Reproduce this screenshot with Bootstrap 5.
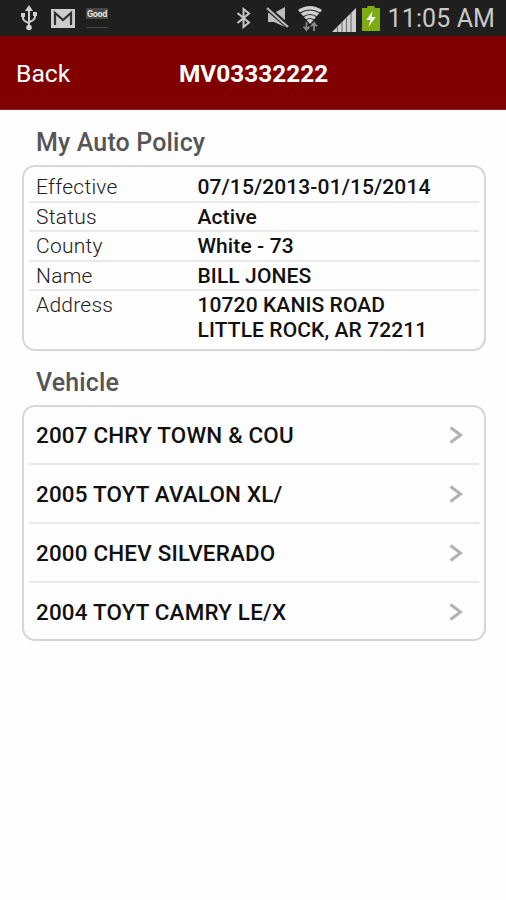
<!DOCTYPE html>
<html lang="en">
<head>
<meta charset="utf-8">
<meta name="viewport" content="width=device-width, initial-scale=1">
<title>My Auto Policy</title>
<link href="https://cdn.jsdelivr.net/npm/bootstrap@5.3.0/dist/css/bootstrap.min.css" rel="stylesheet">
<style>
body{font-family:Roboto,"Liberation Sans",sans-serif;background:#fefefe;color:#111;height:900px;overflow:hidden}
svg{display:block;flex:none}
.status{height:36px;background:#1f1f1f;color:#c9c9c9;padding:0 11px 0 20px}
.clock{font-size:25px;line-height:36px;white-space:nowrap;letter-spacing:.1px;margin-left:8px;padding-top:2px}
.mail{margin-left:13px}
.good{width:22px;height:20px;margin-left:11px;border-bottom:1px solid #484848}
.good span{display:block;height:11px;background:#484848;color:#e2e2e2;font-size:9px;line-height:13px;font-weight:700;letter-spacing:-.4px;text-align:center}
.bt{margin-right:15px}
.mute{margin-right:7px}
.wifi{margin-right:9px;margin-top:1px}
.signal{margin-right:6px;margin-top:3px}
.topbar{height:73.5px;background:#800000;color:#fff;border-bottom:1px solid #922;padding:3px 0 0 16px}
.back{width:163px;font-size:24.7px;line-height:1;color:#fff;padding-top:2px}
.title{font-size:24.4px;line-height:1;font-weight:700}
main{padding:18px 20px 0 22px}
.heading{font-size:25px;font-weight:500;line-height:30px;color:#555;margin:0 0 0 14px;letter-spacing:.15px}
.second{margin-top:17px}
.panel{border:2px solid #d6d6d6;border-radius:13px;background:#fefefe;padding:0 5px}
.info{height:186px;margin-top:7.500px;padding-top:6px}
.info .line{height:29.5px;padding-left:7px;line-height:29px;border-bottom:2px solid #e9e9e9}
.info .line:last-child{height:60px;border:0}
.key{width:161.5px;font-size:21px;color:#222;font-weight:300;letter-spacing:.25px}
.val{font-size:21px;font-weight:500;white-space:nowrap;letter-spacing:.1px}
.info .addr{line-height:25px;padding-top:2px}
.cars{height:236px;margin-top:7px}
.cars .line{height:59.1px;padding:2px 16px 0 7px;font-size:22.4px;letter-spacing:.2px;font-weight:500;border-bottom:2px solid #e9e9e9}
.cars .line:first-child{height:58px}
.cars .line:last-child{border:0;height:58px}
.cars svg{margin-top:-2px}
</style>
</head>
<body>
<div class="status d-flex align-items-center">
  <svg width="18" height="26" viewBox="0 0 18 26" fill="none" stroke="#d0d0d0" stroke-width="2"><path d="M9 3v19M3 10v3q0 3 6 5M15 9v3q0 3-6 5"/><path d="M9 0l4 6H5zM1 8h4v4H1zM13 7h4v4h-4z" fill="#d0d0d0" stroke="none"/><circle cx="9" cy="22.500" r="2.800" fill="#d0d0d0" stroke="none"/></svg>
  <svg class="mail" width="24" height="19" viewBox="0 0 24 19"><path fill="#ccc" d="M0 0h24v19H0z"/><path d="M4 16V4l8 7 8-7v12" fill="none" stroke="#303030" stroke-width="2.200"/></svg>
  <div class="good"><span>Good</span></div>
  <svg class="bt ms-auto" width="15" height="22" viewBox="0 0 15 22" fill="none" stroke="#c8c8c8" stroke-width="2"><path d="M1.500 6L13 15.500 7.500 20V2L13 6.500 1.500 16"/></svg>
  <svg class="mute" width="24" height="22" viewBox="0 0 24 22"><path fill="#bdbdbd" d="M2 6h6L19 0v20L8 15H2z"/><path d="M0 0l23 20" stroke="#1f1f1f" stroke-width="5"/><path d="M1 1l21 19" stroke="#bdbdbd" stroke-width="2.200"/></svg>
  <svg class="wifi" width="26" height="27" viewBox="0 0 26 27"><path d="M13 19L1 5Q13-3 25 5z" fill="#cfcfcf"/><path d="M3 8q10-6 20 0M6 12q7-5 14 0M9 15q4-3 8 0" fill="none" stroke="#292929" stroke-width="1.200"/><path d="M7 17h4v9H7zM15 17h4v9h-4z" fill="#1f1f1f"/><path d="M9.500 17v7M6.500 21.500L9.500 25l3-3.500M17 26v-7M14 21.500l3-3.500 3 3.500" fill="none" stroke="#8a8a8a" stroke-width="1.800"/></svg>
  <svg class="signal" width="24" height="24" viewBox="0 0 24 24"><path d="M0 24L24 0v24z" fill="#cfcfcf"/><path d="M5.500 18.500V24M10 14v10M14.500 9.500V24M19 5v19" stroke="#777" stroke-width="1.200"/></svg>
  <svg width="18" height="25" viewBox="0 0 17 25" preserveAspectRatio="none"><path fill="#7cac12" d="M0 2h5V0h7v2h5v23H0z"/><path fill="#f2f5e8" d="M10 5L4 14h4l-2 7 7-10H9z"/></svg>
  <div class="clock">11:05 AM</div>
</div>
<header class="topbar d-flex align-items-center">
  <div class="back">Back</div>
  <div class="title">MV03332222</div>
</header>
<main class="d-flex flex-column">
  <h2 class="heading">My Auto Policy</h2>
  <section class="panel info">
    <div class="line d-flex"><div class="key">Effective</div><div class="val">07/15/2013-01/15/2014</div></div>
    <div class="line d-flex"><div class="key">Status</div><div class="val">Active</div></div>
    <div class="line d-flex"><div class="key">County</div><div class="val">White - 73</div></div>
    <div class="line d-flex"><div class="key">Name</div><div class="val">BILL JONES</div></div>
    <div class="line d-flex"><div class="key">Address</div><div class="val addr">10720 KANIS ROAD<br>LITTLE ROCK, AR 72211</div></div>
  </section>
  <h2 class="heading second">Vehicle</h2>
  <section class="panel cars">
    <div class="line d-flex align-items-center justify-content-between"><span>2007 CHRY TOWN &amp; COU</span><svg width="14" height="18" viewBox="0 0 14 18"><path d="M1.500 1.500L11.500 9l-10 7.500" fill="none" stroke="#b2b2b2" stroke-width="3"/></svg></div>
    <div class="line d-flex align-items-center justify-content-between"><span>2005 TOYT AVALON XL/</span><svg width="14" height="18" viewBox="0 0 14 18"><path d="M1.500 1.500L11.500 9l-10 7.500" fill="none" stroke="#b2b2b2" stroke-width="3"/></svg></div>
    <div class="line d-flex align-items-center justify-content-between"><span>2000 CHEV SILVERADO</span><svg width="14" height="18" viewBox="0 0 14 18"><path d="M1.500 1.500L11.500 9l-10 7.500" fill="none" stroke="#b2b2b2" stroke-width="3"/></svg></div>
    <div class="line d-flex align-items-center justify-content-between"><span>2004 TOYT CAMRY LE/X</span><svg width="14" height="18" viewBox="0 0 14 18"><path d="M1.500 1.500L11.500 9l-10 7.500" fill="none" stroke="#b2b2b2" stroke-width="3"/></svg></div>
  </section>
</main>
<script src="https://cdn.jsdelivr.net/npm/bootstrap@5.3.0/dist/js/bootstrap.bundle.min.js"></script>
</body>
</html>
